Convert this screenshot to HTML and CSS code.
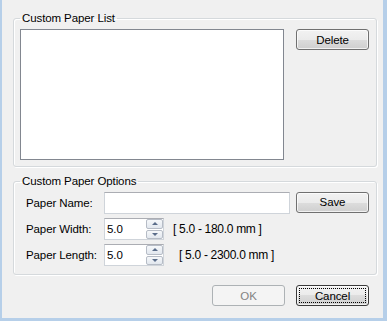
FILE: index.html
```html
<!DOCTYPE html>
<html>
<head>
<meta charset="utf-8">
<link rel="stylesheet" href="styles.css">
</head>
<body>
<div class="window">
  <fieldset class="group group-list">
    <legend class="group-title">Custom Paper List</legend>
    <div class="list-row">
      <div class="listbox"></div>
      <button class="btn">Delete</button>
    </div>
  </fieldset>
  <fieldset class="group group-options">
    <legend class="group-title title-options">Custom Paper Options</legend>
    <div class="form-row">
      <span class="label">Paper Name:</span>
      <div class="textbox name-box"></div>
      <button class="btn btn-save">Save</button>
    </div>
    <div class="form-row">
      <span class="label">Paper Width:</span>
      <div class="spinner">
        <span class="spin-value">5.0</span>
        <div class="spin-buttons">
          <span class="spin-btn"><span class="arrow-up"></span></span>
          <span class="spin-btn"><span class="arrow-down"></span></span>
        </div>
      </div>
      <span class="range">[ 5.0 - 180.0 mm ]</span>
    </div>
    <div class="form-row row-last">
      <span class="label">Paper Length:</span>
      <div class="spinner">
        <span class="spin-value">5.0</span>
        <div class="spin-buttons">
          <span class="spin-btn"><span class="arrow-up"></span></span>
          <span class="spin-btn"><span class="arrow-down"></span></span>
        </div>
      </div>
      <span class="range range-wide">[ 5.0 - 2300.0 mm ]</span>
    </div>
  </fieldset>
  <div class="actions">
    <button class="btn btn-disabled">OK</button>
    <button class="btn btn-default"><span class="focus">Cancel</span></button>
  </div>
</div>
</body>
</html>
```

FILE: styles.css
```css
html, body {
  margin: 0;
  padding: 0;
  background: #f0f0f0;
}
body {
  font-family: "Liberation Sans", Arial, sans-serif;
  font-size: 11px;
  letter-spacing: -0.1px;
  color: #000;
}
.window {
  width: 387px;
  height: 321px;
  box-sizing: border-box;
  background: #f0f0f0;
  border-left: 2px solid #b6cfe9;
  border-right: 4px solid #b6cfe9;
  border-bottom: 3px solid #b6cfe9;
  padding-top: 11px;
  overflow: hidden;
}
.group {
  margin: 0 6px 0 11px;
  border: 1px solid #d5d9dc;
  border-radius: 3px;
  box-shadow: inset 1px 1px 0 #fff, 1px 1px 0 #fff;
  min-width: 0;
}
.group-title {
  padding: 0 2px;
  margin-left: 0;
  line-height: 14px;
  height: 14px;
  font-size: 11.5px;
}
.title-options {
  margin-left: -6px;
}
.group-list {
  padding: 4px 7px 6px 6px;
}
.group-options {
  margin-top: 7px;
  padding: 4px 7px 8px 12px;
}
.list-row {
  display: flex;
  align-items: flex-start;
  justify-content: space-between;
}
.listbox {
  width: 264px;
  height: 131px;
  box-sizing: border-box;
  background: #fff;
  border: 1px solid #828790;
}
.btn {
  width: 73px;
  height: 21px;
  box-sizing: border-box;
  border: 1px solid #707070;
  border-radius: 3px;
  background: linear-gradient(#f2f2f2 0%, #ebebeb 50%, #dddddd 50%, #cfcfcf 100%);
  box-shadow: inset 0 0 0 1px rgba(255,255,255,0.7);
  font-family: "Liberation Sans", Arial, sans-serif;
  font-size: 11.5px;
  letter-spacing: -0.1px;
  color: #000;
  padding: 0;
  margin: 0;
  display: flex;
  align-items: center;
  justify-content: center;
}
.form-row {
  display: flex;
  align-items: center;
  height: 22px;
  margin-bottom: 4px;
  font-size: 11.5px;
}
.form-row.row-last {
  margin-bottom: 0;
  margin-top: 1px;
}
.label {
  width: 78px;
  flex: none;
}
.textbox {
  height: 22px;
  box-sizing: border-box;
  background: #fff;
  border: 1px solid #cfd4da;
  border-top-color: #abadb3;
}
.name-box {
  width: 186px;
}
.btn-save {
  margin-left: auto;
  margin-top: -2px;
}
.spinner {
  width: 60px;
  height: 22px;
  box-sizing: border-box;
  background: #fff;
  border: 1px solid #cfd4da;
  border-top-color: #abadb3;
  display: flex;
  align-items: stretch;
}
.spin-value {
  flex: 1;
  padding-left: 2px;
  display: flex;
  align-items: center;
}
.spin-buttons {
  width: 17px;
  display: flex;
  flex-direction: column;
  gap: 1px;
  padding: 0;
}
.spin-btn {
  flex: 1;
  box-sizing: border-box;
  border: 1px solid #b6bcc6;
  border-radius: 2px;
  background: linear-gradient(#f6f8fa, #e2e7ee);
  display: flex;
  align-items: center;
  justify-content: center;
}
.arrow-up {
  width: 0;
  height: 0;
  border-left: 3px solid transparent;
  border-right: 3px solid transparent;
  border-bottom: 3px solid #5a6d8a;
}
.arrow-down {
  width: 0;
  height: 0;
  border-left: 3px solid transparent;
  border-right: 3px solid transparent;
  border-top: 3px solid #5a6d8a;
}
.range {
  margin-left: 9px;
  font-size: 12px;
  letter-spacing: -0.3px;
}
.range-wide {
  margin-left: 15px;
}
.actions {
  display: flex;
  justify-content: flex-end;
  gap: 11px;
  margin-top: 10px;
  padding-right: 14px;
}
.btn-disabled {
  border-color: #adb2b5;
  background: #f4f4f4;
  box-shadow: none;
  color: #838383;
}
.btn-default {
  border-color: #3a3a3a;
  padding: 2px;
}
.focus {
  flex: 1;
  align-self: stretch;
  border: 1px dotted #000;
  display: flex;
  align-items: center;
  justify-content: center;
}
```
